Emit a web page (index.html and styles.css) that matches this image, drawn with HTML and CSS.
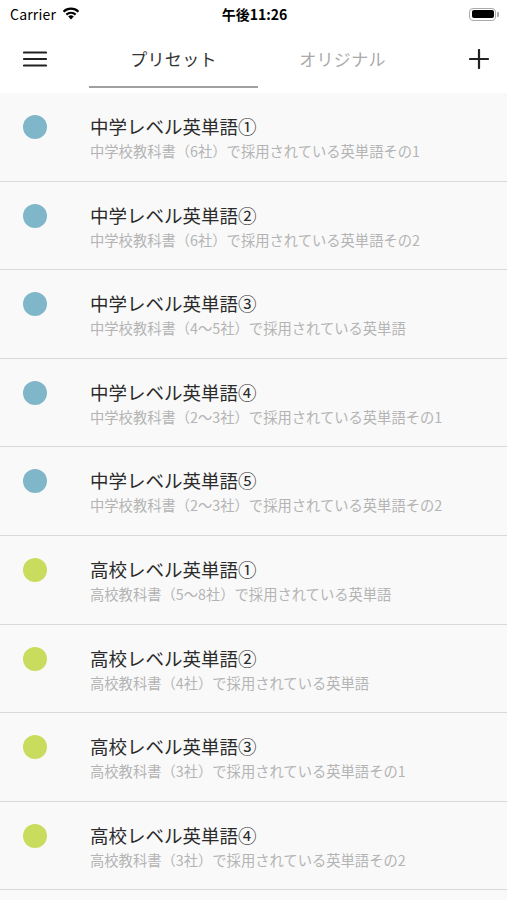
FILE: index.html
```html
<!DOCTYPE html>
<html lang="ja">
<head>
    <meta charset="UTF-8">
    <meta name="viewport" content="width=device-width, initial-scale=1.0">
    <title>英単語リスト</title>
    <link rel="stylesheet" href="styles.css">
</head>
<body>
    <header class="top">
        <div class="status-bar">
            <div class="carrier">
                Carrier
                <svg class="wifi" width="18" height="13" viewBox="0 0 18 13">
                    <path d="M9 12.5 L6.2 9.4 A4.2 4.2 0 0 1 11.8 9.4 Z" fill="#000"/>
                    <path d="M3.6 6.8 A7.8 7.8 0 0 1 14.4 6.8 L12.9 8.4 A5.6 5.6 0 0 0 5.1 8.4 Z" fill="#000"/>
                    <path d="M0.8 3.9 A11.8 11.8 0 0 1 17.2 3.9 L15.7 5.5 A9.6 9.6 0 0 0 2.3 5.5 Z" fill="#000"/>
                </svg>
            </div>
            <div class="clock">午後11:26</div>
            <div class="battery">
                <span class="battery-body"><span class="battery-level"></span></span>
                <span class="battery-tip"></span>
            </div>
        </div>
        <nav class="nav-bar">
            <button class="icon-btn menu" aria-label="メニュー">
                <svg width="24" height="16" viewBox="0 0 24 16">
                    <path d="M1 1.5 H23 M1 8 H23 M1 14.5 H23" stroke="#222" stroke-width="2.2" stroke-linecap="round"/>
                </svg>
            </button>
            <div class="tabs">
                <div class="tab active">プリセット</div>
                <div class="tab">オリジナル</div>
            </div>
            <button class="icon-btn add" aria-label="追加">
                <svg width="20" height="20" viewBox="0 0 20 20">
                    <path d="M10 1 V19 M1 10 H19" stroke="#222" stroke-width="2.2" stroke-linecap="round"/>
                </svg>
            </button>
        </nav>
    </header>

    <ul class="word-list">
        <li class="item">
            <span class="dot junior"></span>
            <div class="text">
                <div class="title">中学レベル英単語①</div>
                <div class="sub">中学校教科書（6社）で採用されている英単語その1</div>
            </div>
        </li>
        <li class="item">
            <span class="dot junior"></span>
            <div class="text">
                <div class="title">中学レベル英単語②</div>
                <div class="sub">中学校教科書（6社）で採用されている英単語その2</div>
            </div>
        </li>
        <li class="item">
            <span class="dot junior"></span>
            <div class="text">
                <div class="title">中学レベル英単語③</div>
                <div class="sub">中学校教科書（4～5社）で採用されている英単語</div>
            </div>
        </li>
        <li class="item">
            <span class="dot junior"></span>
            <div class="text">
                <div class="title">中学レベル英単語④</div>
                <div class="sub">中学校教科書（2～3社）で採用されている英単語その1</div>
            </div>
        </li>
        <li class="item">
            <span class="dot junior"></span>
            <div class="text">
                <div class="title">中学レベル英単語⑤</div>
                <div class="sub">中学校教科書（2～3社）で採用されている英単語その2</div>
            </div>
        </li>
        <li class="item">
            <span class="dot senior"></span>
            <div class="text">
                <div class="title">高校レベル英単語①</div>
                <div class="sub">高校教科書（5～8社）で採用されている英単語</div>
            </div>
        </li>
        <li class="item">
            <span class="dot senior"></span>
            <div class="text">
                <div class="title">高校レベル英単語②</div>
                <div class="sub">高校教科書（4社）で採用されている英単語</div>
            </div>
        </li>
        <li class="item">
            <span class="dot senior"></span>
            <div class="text">
                <div class="title">高校レベル英単語③</div>
                <div class="sub">高校教科書（3社）で採用されている英単語その1</div>
            </div>
        </li>
        <li class="item">
            <span class="dot senior"></span>
            <div class="text">
                <div class="title">高校レベル英単語④</div>
                <div class="sub">高校教科書（3社）で採用されている英単語その2</div>
            </div>
        </li>
    </ul>
</body>
</html>
```

FILE: styles.css
```css
:root {
    --text: #2b2b2b;
    --muted: #b4b4b4;
    --list-bg: #f9f9f9;
    --line: #d9d9d9;
    --junior: #80b6ca;
    --senior: #c9dc5e;
}

* {
    margin: 0;
    padding: 0;
    box-sizing: border-box;
}

body {
    font-family: "Noto Sans CJK JP", "Noto Sans", sans-serif;
    background-color: var(--list-bg);
    color: var(--text);
    width: 507px;
    height: 900px;
    overflow: hidden;
}

.top {
    background-color: #fff;
}

/* status bar */
.status-bar {
    height: 28px;
    display: flex;
    align-items: center;
    justify-content: space-between;
    padding: 0 8px 0 10px;
    font-size: 14px;
    color: #000;
}

.carrier {
    flex: 1;
    display: flex;
    align-items: center;
    gap: 6px;
    letter-spacing: 0.2px;
}

.wifi {
    margin-top: -2px;
}

.clock {
    font-weight: 700;
    font-size: 14px;
}

.battery {
    flex: 1;
    display: flex;
    justify-content: flex-end;
    align-items: center;
}

.battery-body {
    width: 27px;
    height: 13px;
    border: 1.5px solid #aaa;
    border-radius: 4px;
    padding: 1.5px;
    display: flex;
}

.battery-level {
    flex: 1;
    background-color: #000;
    border-radius: 2px;
}

.battery-tip {
    width: 2px;
    height: 5px;
    background-color: #aaa;
    border-radius: 0 1px 1px 0;
    margin-left: 1px;
}

/* nav */
.nav-bar {
    height: 65px;
    display: flex;
    align-items: flex-start;
    padding-bottom: 5px;
}

.icon-btn {
    background: none;
    border: none;
    display: flex;
    align-items: center;
    cursor: pointer;
    height: 62px;
}

.menu {
    width: 89px;
    padding-left: 23px;
}

.add {
    width: 80px;
    padding-left: 42px;
}

.tabs {
    display: flex;
}

.tab {
    width: 169px;
    padding-top: 4px;
    line-height: 54px;
    text-align: center;
    font-size: 17px;
    color: #aaa;
    letter-spacing: 0.3px;
    border-bottom: 2px solid transparent;
}

.tab.active {
    color: #333;
    border-bottom-color: #a0a0a0;
}

/* list */
.word-list {
    list-style: none;
}

.item {
    height: 88.6px;
    display: flex;
    align-items: flex-start;
    padding-left: 23px;
    border-bottom: 1px solid var(--line);
    background-color: var(--list-bg);
}

.dot {
    width: 24px;
    height: 24px;
    border-radius: 50%;
    margin-top: 22px;
    flex-shrink: 0;
}

.dot.junior {
    background-color: var(--junior);
}

.dot.senior {
    background-color: var(--senior);
}

.text {
    margin-left: 43px;
    padding-top: 21px;
}

.title {
    font-size: 18.5px;
    line-height: 24px;
    color: var(--text);
}

.sub {
    margin-top: 3px;
    font-size: 14.3px;
    line-height: 20px;
    color: var(--muted);
}
```
